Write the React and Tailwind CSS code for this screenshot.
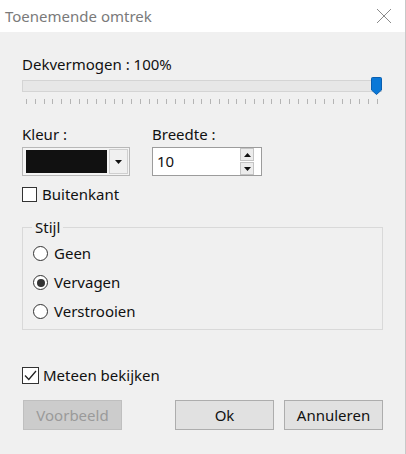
import { useState } from "react";

const FONT = { fontFamily: '"Noto Sans", "Open Sans", Arial, sans-serif' };

function Radio({ checked, label }) {
  return (
    <label className="flex items-center h-[15px] gap-[6px] text-[15px] text-[#111]">
      <span className="w-[15px] h-[15px] rounded-full border border-[#333] bg-white flex items-center justify-center">
        {checked && <span className="w-[8px] h-[8px] rounded-full bg-[#333]" />}
      </span>
      {label}
    </label>
  );
}

function Ticks() {
  const ticks = Array.from({ length: 41 }, (_, i) => i);
  return (
    <div className="flex justify-between pl-[4px] pr-[4px] h-[5px]">
      {ticks.map((i) => (
        <span key={i} className="w-px h-[5px] bg-[#b4b4b4]" />
      ))}
    </div>
  );
}

export default function App() {
  const [breedte, setBreedte] = useState(10);

  return (
    <div className="w-[406px] h-[454px] bg-[#f0f0f0] border-r border-[#c8c8c8] overflow-hidden" style={FONT}>
      {/* titelbalk */}
      <div className="h-[32px] bg-white flex items-center justify-between pl-[5px] pr-[13px]">
        <span className="text-[15px] text-[#7a7a7a]">Toenemende omtrek</span>
        <svg width="16" height="16" viewBox="0 0 16 16">
          <path d="M1 1 L15 15 M15 1 L1 15" stroke="#8a8a8a" strokeWidth="1" />
        </svg>
      </div>

      <div className="px-[22px]">
        <div className="mt-[22px] h-[20px] text-[15px] leading-[20px] text-[#111]">Dekvermogen : 100%</div>

        {/* schuifregelaar */}
        <div className="relative mt-[6px] w-[360px]">
          <div className="h-[12px] bg-[#e7e7e7] border border-[#d4d4d4]" />
          <svg className="absolute right-[0px] top-[-3px]" width="11" height="18" viewBox="0 0 11 18">
            <path d="M0.5 1.5 Q0.5 0.5 1.5 0.5 L9.5 0.5 Q10.5 0.5 10.5 1.5 L10.5 13 L5.5 17.5 L0.5 13 Z" fill="#0a78d7" stroke="#0a5fb0" />
          </svg>
          <div className="mt-[7px]">
            <Ticks />
          </div>
        </div>

        {/* kleur en breedte */}
        <div className="flex mt-[20px]">
          <div className="w-[130px]">
            <div className="h-[20px] text-[15px] leading-[20px] text-[#111]">Kleur :</div>
            <div className="mt-[3px] w-[108px] h-[29px] border border-[#b8b8b8] bg-[#f4f4f4] flex items-center pl-[3px] pr-[1px] gap-[2px]">
              <div className="w-[81px] h-[23px] bg-[#111]" />
              <div className="flex-1 h-[25px] border border-[#cfcfcf] bg-[#f0f0f0] flex items-center justify-center">
                <svg width="7" height="4" viewBox="0 0 7 4">
                  <path d="M0 0 L7 0 L3.5 4 Z" fill="#111" />
                </svg>
              </div>
            </div>
          </div>
          <div>
            <div className="h-[20px] text-[15px] leading-[20px] text-[#111]">Breedte :</div>
            <div className="mt-[3px] w-[110px] h-[29px] border border-[#9c9c9c] bg-white flex items-center">
              <input
                value={breedte}
                onChange={(e) => setBreedte(e.target.value)}
                className="w-[84px] pl-[4px] text-[15px] text-[#111] bg-transparent outline-none"
                style={FONT}
              />
              <div className="flex flex-col gap-[1px] ml-[3px]">
                <div className="w-[14px] h-[13px] border border-[#c4c4c4] bg-[#ececec] flex items-center justify-center">
                  <svg width="7" height="4" viewBox="0 0 7 4">
                    <path d="M0 4 L7 4 L3.5 0 Z" fill="#111" />
                  </svg>
                </div>
                <div className="w-[14px] h-[13px] border border-[#c4c4c4] bg-[#ececec] flex items-center justify-center">
                  <svg width="7" height="4" viewBox="0 0 7 4">
                    <path d="M0 0 L7 0 L3.5 4 Z" fill="#111" />
                  </svg>
                </div>
              </div>
            </div>
          </div>
        </div>

        {/* buitenkant */}
        <label className="flex items-center gap-[5px] mt-[11px] h-[15px] text-[15px] text-[#111]">
          <span className="w-[15px] h-[15px] border border-[#333] bg-white" />
          Buitenkant
        </label>

        {/* stijl groep */}
        <div className="relative mt-[25px] w-[361px] h-[103px] border border-[#d9d9d9]">
          <span className="absolute left-[9px] top-[-11px] px-[3px] bg-[#f0f0f0] text-[15px] leading-[20px] text-[#111]">Stijl</span>
          <div className="flex flex-col gap-[14px] pl-[10px] pt-[18px]">
            <Radio label="Geen" />
            <Radio label="Vervagen" checked />
            <Radio label="Verstrooien" />
          </div>
        </div>

        {/* meteen bekijken */}
        <label className="flex items-center gap-[4px] mt-[37px] h-[17px] text-[15px] text-[#111]">
          <span className="w-[17px] h-[17px] border border-[#333] bg-white flex items-center justify-center">
            <svg width="13" height="11" viewBox="0 0 13 11">
              <path d="M1 5.5 L4.8 9.5 L12 1" stroke="#222" strokeWidth="1.3" fill="none" />
            </svg>
          </span>
          Meteen bekijken
        </label>

        {/* knoppen */}
        <div className="flex mt-[16px]">
          <button
            disabled
            className="w-[99px] h-[30px] ml-[1px] border border-[#bfbfbf] bg-[#cccccc] text-[15px] text-[#9a9a9a]"
            style={FONT}
          >
            Voorbeeld
          </button>
          <button
            className="w-[99px] h-[30px] ml-[53px] border border-[#adadad] bg-[#e1e1e1] text-[15px] text-[#111]"
            style={FONT}
          >
            Ok
          </button>
          <button
            className="w-[99px] h-[30px] ml-[10px] border border-[#adadad] bg-[#e1e1e1] text-[15px] text-[#111]"
            style={FONT}
          >
            Annuleren
          </button>
        </div>
      </div>
    </div>
  );
}
